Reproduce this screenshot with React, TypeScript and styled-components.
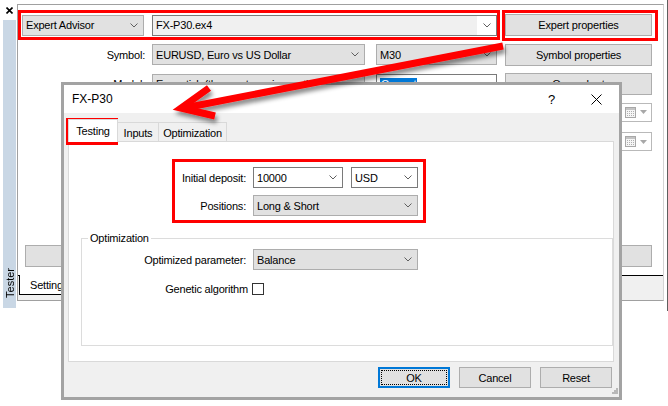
import styled, { createGlobalStyle } from 'styled-components';

const GlobalStyle = createGlobalStyle`
  * { box-sizing: border-box; }
  html, body { margin: 0; padding: 0; background: #ffffff; }
  body {
    font-family: "Liberation Sans", Arial, sans-serif;
    font-size: 11px;
    letter-spacing: -0.2px;
    color: #000;
  }
`;

type Tone = 'gray' | 'white' | 'edit';

const Screen = styled.div`
  position: relative;
  width: 668px;
  height: 406px;
  overflow: hidden;
  background: #fff;
`;

/* ---------- tester window behind the dialog ---------- */

const TesterWindow = styled.div`
  display: flex;
  width: 668px;
  height: 311px;
  border-right: 1px solid #5f5f5f;
`;

const SideBar = styled.div`
  width: 17px;
  display: flex;
  flex-direction: column;
`;

const CloseCell = styled.div`
  height: 20px;
  display: flex;
  align-items: center;
  justify-content: center;
  padding-left: 1px;
`;

const SideTab = styled.div`
  flex: 1;
  margin: 0 1px 3px 3px;
  background: #c9d7e5;
  display: flex;
  align-items: flex-end;
  justify-content: center;
  padding-bottom: 10px;
`;

const SideTabLabel = styled.span`
  writing-mode: vertical-rl;
  transform: rotate(180deg);
  letter-spacing: 0;
`;

const Panel = styled.div`
  flex: 1;
  display: flex;
  flex-direction: column;
  margin: 4px 3px 10px 0;
  border: 1px solid #a0a0a0;
  border-right-color: #d4d4d4;
  background: #fff;
`;

const Controls = styled.div`
  flex: 1;
  display: flex;
  flex-direction: column;
  padding: 9px 10px 8px 4px;
`;

const SettingsGrid = styled.div`
  display: grid;
  grid-template-columns: 122px 216px 121px 147px;
  grid-auto-rows: 22px;
  column-gap: 8px;
  row-gap: 7.5px;
  align-items: center;
`;

const FieldLabel = styled.span<{ $nudge?: number }>`
  justify-self: end;
  white-space: nowrap;
  margin-right: ${({ $nudge = 0 }) => -$nudge}px;
`;

const ComboBox = styled.div<{ $tone: Tone; $w?: number; $span?: number }>`
  display: flex;
  align-items: stretch;
  width: ${({ $w }) => ($w ? `${$w}px` : '100%')};
  height: 21px;
  ${({ $span }) => ($span ? `grid-column: span ${$span};` : '')}
  border: 1px solid ${({ $tone }) => ($tone === 'gray' ? '#adadad' : '#7a7a7a')};
  background: ${({ $tone }) => ($tone === 'gray' ? '#e1e1e1' : $tone === 'edit' ? '#f0f0f0' : '#ffffff')};
  overflow: hidden;
`;

const ComboValue = styled.span`
  flex: 1;
  min-width: 0;
  display: flex;
  align-items: center;
  padding-left: 3px;
  white-space: nowrap;
  overflow: hidden;
`;

const ComboArrow = styled.span<{ $tone: Tone }>`
  flex: none;
  width: 19px;
  display: flex;
  align-items: center;
  justify-content: center;
  background: ${({ $tone }) => ($tone === 'edit' ? '#ffffff' : 'transparent')};
`;

const Selected = styled.span`
  background: #0078d7;
  color: #fff;
  padding: 0 1px;
`;

const PushButton = styled.button<{ $h?: number }>`
  display: flex;
  align-items: center;
  justify-content: center;
  height: ${({ $h = 22 }) => $h}px;
  padding: 0;
  font: inherit;
  letter-spacing: inherit;
  color: #000;
  background: #e1e1e1;
  border: 1px solid #adadad;
  white-space: nowrap;
`;

const DatePicker = styled.div`
  grid-column: 4;
  align-self: start;
  height: 19px;
  border: 1px solid #b9b9b9;
  background: #fff;
  display: flex;
  align-items: center;
  justify-content: flex-end;
  gap: 4px;
  padding-right: 4px;
`;

const StartButton = styled(PushButton)`
  margin: auto 1px 0 3px;
`;

const TabStrip = styled.div`
  height: 25px;
  flex: none;
  background: #f0f0f0;
  border-top: 1px solid #000;
  padding-left: 1px;
  display: flex;
  align-items: flex-start;
`;

const BottomTab = styled.div`
  margin-top: -1px;
  height: 20px;
  padding: 0 12px 0 10px;
  background: #fff;
  border: 1px solid #000;
  border-top: none;
  display: flex;
  align-items: center;
`;

/* ---------- the properties dialog ---------- */

const Dialog = styled.div`
  position: absolute;
  left: 61px;
  top: 82px;
  width: 561px;
  height: 318px;
  border: 3px solid #a3a3a3;
  background: #f0f0f0;
  display: flex;
  flex-direction: column;
`;

const TitleBar = styled.div`
  height: 28px;
  flex: none;
  display: flex;
  align-items: center;
  background: #fff;
  padding-left: 8px;
`;

const Title = styled.span`
  flex: 1;
  font-size: 12px;
  letter-spacing: 0;
`;

const CaptionButton = styled.div`
  width: 45px;
  height: 28px;
  display: flex;
  align-items: center;
  justify-content: center;
  font-size: 13px;
`;

const DialogBody = styled.div`
  flex: 1;
  display: flex;
  flex-direction: column;
  padding: 6px 5px 0 4px;
`;

const TabBar = styled.div`
  height: 22px;
  display: flex;
  align-items: flex-end;
`;

const Tab = styled.div<{ $active?: boolean; $w: number }>`
  position: relative;
  z-index: ${({ $active }) => ($active ? 1 : 0)};
  width: ${({ $w }) => $w}px;
  height: ${({ $active }) => ($active ? 23 : 19)}px;
  margin-bottom: ${({ $active }) => ($active ? -1 : 0)}px;
  margin-left: -1px;
  &:first-child { margin-left: 0; }
  background: ${({ $active }) => ($active ? '#ffffff' : '#f0f0f0')};
  border: 1px solid #d9d9d9;
  border-bottom: none;
  display: flex;
  align-items: center;
  justify-content: center;
  padding-top: ${({ $active }) => ($active ? 0 : 2)}px;
`;

const TabPanel = styled.div`
  height: 221px;
  flex: none;
  border: 1px solid #d9d9d9;
  background: #fff;
  display: flex;
  flex-direction: column;
`;

const DepositGrid = styled.div`
  margin: 25px 0 0 106px;
  display: grid;
  grid-template-columns: 71px 165px;
  grid-auto-rows: 21px;
  column-gap: 7px;
  row-gap: 7px;
  align-items: center;
`;

const ComboPair = styled.div`
  display: flex;
  gap: 8px;
`;

const GroupBox = styled.fieldset`
  margin: 16px 0 0 12px;
  padding: 0;
  min-width: 0;
  height: 114px;
  border: 1px solid #dcdcdc;
`;

const GroupTitle = styled.legend`
  margin-left: 6px;
  padding: 0 2px;
  line-height: 13px;
`;

const OptGrid = styled.div`
  margin-top: 4px;
  display: grid;
  grid-template-columns: 164px 165px;
  grid-auto-rows: 21px;
  column-gap: 7px;
  row-gap: 8px;
  align-items: center;
`;

const CheckBox = styled.span`
  width: 12px;
  height: 12px;
  margin-left: -1px;
  border: 1px solid #333;
  background: #fff;
`;

const ButtonRow = styled.div`
  display: flex;
  justify-content: flex-end;
  gap: 9px;
  margin-top: 5px;
  padding-right: 2px;
`;

const DialogButton = styled(PushButton)<{ $default?: boolean }>`
  position: relative;
  width: 72px;
  ${({ $default }) =>
    $default
      ? `
    border-color: #0078d7;
    box-shadow: inset 0 0 0 1px #0078d7;
    &::after {
      content: '';
      position: absolute;
      inset: 2px;
      border: 1px dotted #000;
    }
  `
      : ''}
`;

const Grip = styled.svg`
  position: absolute;
  right: 1px;
  bottom: 2px;
`;

/* ---------- annotations drawn over the screenshot ---------- */

const Highlight = styled.div<{ $x: number; $y: number; $w: number; $h: number }>`
  position: absolute;
  left: ${({ $x }) => $x}px;
  top: ${({ $y }) => $y}px;
  width: ${({ $w }) => $w}px;
  height: ${({ $h }) => $h}px;
  border: 3px solid #ff0000;
  pointer-events: none;
`;

const ArrowLayer = styled.svg`
  position: absolute;
  left: 0;
  top: 0;
  pointer-events: none;
`;

const Chevron = () => (
  <svg width="8" height="5" viewBox="0 0 8 5">
    <path d="M0.5 0.5 L4 4 L7.5 0.5" fill="none" stroke="#5f5f5f" strokeWidth="1" />
  </svg>
);

const Combo = ({ tone, w, span, children }: { tone: Tone; w?: number; span?: number; children: React.ReactNode }) => (
  <ComboBox $tone={tone} $w={w} $span={span}>
    <ComboValue>{children}</ComboValue>
    <ComboArrow $tone={tone}>
      <Chevron />
    </ComboArrow>
  </ComboBox>
);

const CalendarIcon = () => (
  <svg width="11" height="11" viewBox="0 0 11 11">
    <rect x="0.5" y="0.5" width="10" height="10" fill="#f6f6f6" stroke="#a8a8a8" />
    <rect x="1" y="1" width="9" height="2" fill="#c4c4c4" />
    {[4, 6, 8].map((y) => [2, 4, 6, 8].map((x) => <rect key={`${x}-${y}`} x={x} y={y} width="1" height="1" fill="#b0b0b0" />))}
  </svg>
);

const DropTriangle = () => (
  <svg width="7" height="4" viewBox="0 0 7 4">
    <path d="M0 0 H7 L3.5 4 Z" fill="#a8a8a8" />
  </svg>
);

const App = () => {
  return (
    <>
      <GlobalStyle />
      <Screen>
        <TesterWindow>
          <SideBar>
            <CloseCell>
              <svg width="7" height="7" viewBox="0 0 7 7">
                <path d="M0.5 0.5 L6.5 6.5 M6.5 0.5 L0.5 6.5" stroke="#000" strokeWidth="1.6" />
              </svg>
            </CloseCell>
            <SideTab>
              <SideTabLabel>Tester</SideTabLabel>
            </SideTab>
          </SideBar>

          <Panel>
            <Controls>
              <SettingsGrid>
                <Combo tone="gray">Expert Advisor</Combo>
                <Combo tone="edit" span={2}>FX-P30.ex4</Combo>
                <PushButton>Expert properties</PushButton>

                <FieldLabel $nudge={1}>Symbol:</FieldLabel>
                <Combo tone="gray" w={213}>EURUSD, Euro vs US Dollar</Combo>
                <Combo tone="gray">M30</Combo>
                <PushButton>Symbol properties</PushButton>

                <FieldLabel $nudge={1}>Model:</FieldLabel>
                <Combo tone="gray" w={213}>Every tick (the most precise method)</Combo>
                <Combo tone="white">
                  <Selected>Current</Selected>
                </Combo>
                <PushButton>Open chart</PushButton>

                <DatePicker>
                  <CalendarIcon />
                  <DropTriangle />
                </DatePicker>
                <DatePicker>
                  <CalendarIcon />
                  <DropTriangle />
                </DatePicker>
              </SettingsGrid>
              <StartButton>Start</StartButton>
            </Controls>
            <TabStrip>
              <BottomTab>Settings</BottomTab>
            </TabStrip>
          </Panel>
        </TesterWindow>

        <Dialog>
          <TitleBar>
            <Title>FX-P30</Title>
            <CaptionButton>?</CaptionButton>
            <CaptionButton>
              <svg width="11" height="11" viewBox="0 0 11 11">
                <path d="M0.5 0.5 L10.5 10.5 M10.5 0.5 L0.5 10.5" stroke="#000" strokeWidth="1" />
              </svg>
            </CaptionButton>
          </TitleBar>
          <DialogBody>
            <TabBar>
              <Tab $active $w={50}>Testing</Tab>
              <Tab $w={42}>Inputs</Tab>
              <Tab $w={69}>Optimization</Tab>
            </TabBar>
            <TabPanel>
              <DepositGrid>
                <FieldLabel>Initial deposit:</FieldLabel>
                <ComboPair>
                  <Combo tone="white" w={90}>10000</Combo>
                  <Combo tone="white" w={67}>USD</Combo>
                </ComboPair>
                <FieldLabel>Positions:</FieldLabel>
                <Combo tone="gray">Long &amp; Short</Combo>
              </DepositGrid>

              <GroupBox>
                <GroupTitle>Optimization</GroupTitle>
                <OptGrid>
                  <FieldLabel>Optimized parameter:</FieldLabel>
                  <Combo tone="gray">Balance</Combo>
                  <FieldLabel $nudge={2}>Genetic algorithm</FieldLabel>
                  <CheckBox />
                </OptGrid>
              </GroupBox>
            </TabPanel>
            <ButtonRow>
              <DialogButton $h={21} $default>OK</DialogButton>
              <DialogButton $h={21}>Cancel</DialogButton>
              <DialogButton $h={21}>Reset</DialogButton>
            </ButtonRow>
          </DialogBody>
          <Grip width="7" height="7" viewBox="0 0 7 7">
            {[
              [5, 0],
              [3, 2],
              [5, 2],
              [1, 4],
              [3, 4],
              [5, 4],
            ].map(([x, y]) => (
              <rect key={`${x}-${y}`} x={x} y={y} width="2" height="2" fill="#b8b8b8" />
            ))}
          </Grip>
        </Dialog>

        <Highlight $x={18} $y={10} $w={482} $h={30} />
        <Highlight $x={502} $y={10} $w={156} $h={31} />
        <Highlight $x={66} $y={118} $w={52} $h={27} />
        <Highlight $x={172} $y={159} $w={254} $h={64} />

        <ArrowLayer width="668" height="406" viewBox="0 0 668 406">
          <defs>
            <filter id="arrowShadow" x="-10%" y="-60%" width="120%" height="220%">
              <feDropShadow dx="2" dy="4" stdDeviation="2" floodColor="#000" floodOpacity="0.45" />
            </filter>
          </defs>
          <g filter="url(#arrowShadow)" stroke="#ff0000" strokeWidth="7" fill="none">
            <line x1="503" y1="46" x2="184" y2="108" />
            <polyline points="209,88 181,108 215,116" strokeLinejoin="miter" />
          </g>
        </ArrowLayer>
      </Screen>
    </>
  );
};

export default App;
